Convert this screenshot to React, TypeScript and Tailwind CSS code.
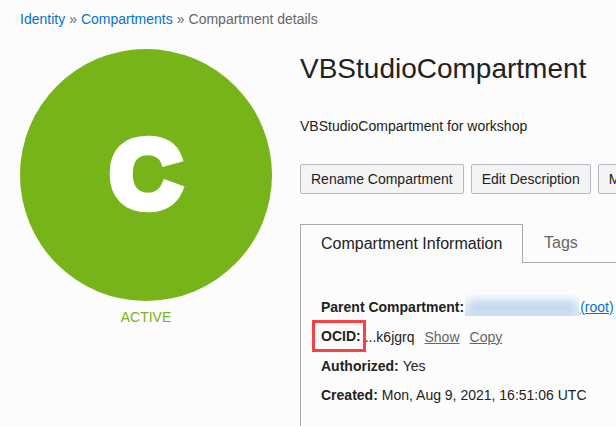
import type { ReactNode } from 'react';

function Action({ children }: { children: ReactNode }) {
  return (
    <button className="h-[30px] shrink-0 rounded-[2px] border border-[#b3b9c5] bg-[#f4f4f4] px-[10px] text-[14px] leading-[28px] text-[#222]">
      {children}
    </button>
  );
}

function Row({ label, children }: { label: string; children: ReactNode }) {
  return (
    <div className="flex h-[29px] items-center">
      <strong className="mr-1 font-bold">{label}</strong>
      {children}
    </div>
  );
}

export default function App() {
  return (
    <div className="h-[426px] w-[616px] overflow-hidden whitespace-nowrap bg-[#fcfcfc] pl-5 font-['Liberation_Sans',Arial,sans-serif] text-[14px] leading-5 text-[#222]">
      <nav className="flex h-[49px] gap-1 pt-[9px] text-[#666]">
        <a className="text-[#0572ce]">Identity</a>
        <span>»</span>
        <a className="text-[#0572ce]">Compartments</a>
        <span>»</span>
        <span>Compartment details</span>
      </nav>
      <div className="flex gap-7">
        <aside className="w-[252px] shrink-0 text-center">
          <div className="flex h-[252px] w-[252px] items-center justify-center rounded-full bg-[#77b41a]">
            <span className="-mt-[2px] scale-x-[1.03] text-[96px] font-bold leading-none text-white [-webkit-text-stroke:8.5px_white]">C</span>
          </div>
          <div className="mt-[6px] text-[#77b41a]">ACTIVE</div>
        </aside>
        <main className="w-[340px] shrink-0">
          <h1 className="h-[67px] pt-[2px] text-[28px] leading-9">VBStudioCompartment</h1>
          <p>VBStudioCompartment for workshop</p>
          <div className="mt-[28px] flex gap-[7px]">
            <Action>Rename Compartment</Action>
            <Action>Edit Description</Action>
            <Action>Move Resource</Action>
          </div>
          <div className="mt-[30px] flex h-[39px]">
            <div className="w-[223px] border-x border-t border-[#aaa] pl-5 pt-[9px] text-[16px]">Compartment Information</div>
            <div className="grow border-b border-[#aaa] pl-[21px] pt-[9px] text-[16px] text-[#666]">Tags</div>
          </div>
          <section className="h-[170px] border-l border-[#aaa] pl-5 pt-[29px]">
            <Row label="Parent Compartment:">
              <span className="-ml-[3px] mt-[-3px] h-[22px] w-[114px] overflow-hidden bg-gradient-to-b from-[#fafcfd] to-[#d3e3f4]">
                <span className="mx-1 mt-[7px] block h-[13px] rounded bg-[#c0d6ef] blur-[4px]" />
              </span>
              <a className="ml-px text-[#0572ce] underline">(root)</a>
            </Row>
            <div className="flex h-[30px] items-center pt-px">
              <strong className="mb-[2px] mr-1 font-bold">OCID:</strong>
              <span className="relative">
                <span className="absolute -left-[53px] -top-[7px] h-[32px] w-[54px] border-[3px] border-[#f94144]" />
                ...k6jgrq
              </span>
              <a className="ml-[10px] text-[#666] underline">Show</a>
              <a className="ml-[10px] text-[#666] underline">Copy</a>
            </div>
            <Row label="Authorized:">Yes</Row>
            <Row label="Created:">Mon, Aug 9, 2021, 16:51:06 UTC</Row>
          </section>
        </main>
      </div>
    </div>
  );
}
